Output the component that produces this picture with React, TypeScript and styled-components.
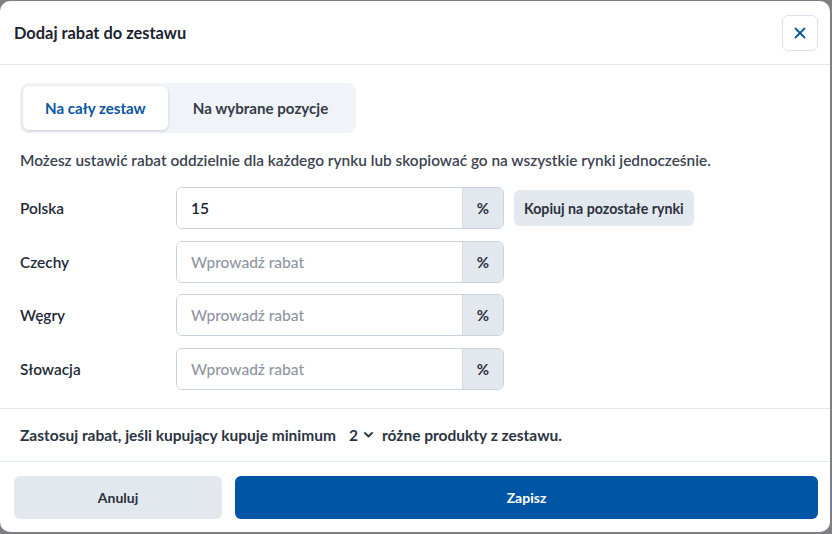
import styled, { createGlobalStyle } from "styled-components";

const GlobalStyle = createGlobalStyle`
    html, body {
        margin: 0;
        padding: 0;
        background: #7d7f82;
        font-family: Lato, "Noto Sans", sans-serif;
    }
`

const Page = styled.div`
    width: 832px;
    height: 534px;
    padding-top: 1px;
    box-sizing: border-box;
`

const Modal = styled.div`
    width: 830px;
    height: 531px;
    background: #ffffff;
    border-radius: 10px;
    display: flex;
    flex-direction: column;
    overflow: hidden;
`

const Header = styled.div`
    height: 63px;
    border-bottom: 1px solid #e2e7ee;
    display: flex;
    align-items: center;
    justify-content: space-between;
    padding: 0 12px 0 14px;
`

const Title = styled.h2`
    margin: 0;
    font-size: 16.4px;
    font-weight: 700;
    color: #1c2330;
`

const CloseButton = styled.button`
    width: 36px;
    height: 36px;
    border: 1px solid #dbe3ed;
    border-radius: 6px;
    background: #ffffff;
    display: flex;
    align-items: center;
    justify-content: center;
    padding: 0;
`

const Body = styled.div`
    padding: 18px 20px 18px 20px;
    border-bottom: 1px solid #e2e7ee;
    display: flex;
    flex-direction: column;
`

const Tabs = styled.div`
    align-self: flex-start;
    display: flex;
    padding: 3px;
    background: #f0f3f7;
    border-radius: 8px;
`

const Tab = styled.div<{ active?: boolean }>`
    height: 44px;
    padding: 0 ${props => (props.active ? "22px" : "25px")};
    display: flex;
    align-items: center;
    border-radius: 6px;
    font-size: 15.1px;
    font-weight: 700;
    color: ${props => (props.active ? "#0b55a3" : "#353c49")};
    background: ${props => (props.active ? "#ffffff" : "transparent")};
    box-shadow: ${props => (props.active ? "0 1px 3px rgba(20, 35, 60, 0.18)" : "none")};
`

const Description = styled.p`
    margin: 17px 0 17px 0;
    font-size: 15.4px;
    line-height: 20px;
    font-weight: 600;
    color: #3b4350;
`

const Rows = styled.div`
    display: flex;
    flex-direction: column;
    gap: 11.7px;
`

const Row = styled.div`
    display: flex;
    align-items: center;
`

const Label = styled.div`
    width: 156px;
    font-size: 15.4px;
    font-weight: 600;
    color: #222a36;
`

const InputGroup = styled.div`
    width: 328px;
    height: 42px;
    box-sizing: border-box;
    border: 1px solid #c9d3df;
    border-radius: 6px;
    display: flex;
    overflow: hidden;
`

const Input = styled.input`
    flex: 1;
    min-width: 0;
    border: none;
    outline: none;
    padding: 0 14px;
    font-family: Lato, "Noto Sans", sans-serif;
    font-size: 15.5px;
    font-weight: 600;
    color: #1c2330;
    background: #ffffff;

    &::placeholder {
        color: #8f96a1;
        font-weight: 500;
    }
`

const Suffix = styled.div`
    width: 40px;
    background: #e3e8ef;
    border-left: 1px solid #d5dce6;
    display: flex;
    align-items: center;
    justify-content: center;
    font-size: 15px;
    font-weight: 700;
    color: #2a313d;
`

const CopyButton = styled.button`
    margin-left: 10px;
    height: 36px;
    padding: 0 10px;
    border: none;
    border-radius: 6px;
    background: #e3e8ef;
    font-family: Lato, "Noto Sans", sans-serif;
    font-size: 14.2px;
    font-weight: 700;
    color: #2a313d;
`

const MinimumBar = styled.div`
    height: 52px;
    border-bottom: 1px solid #e2e7ee;
    padding: 0 20px;
    display: flex;
    align-items: center;
    font-size: 15.5px;
    font-weight: 700;
    color: #2b3443;
`

const CountSelect = styled.span`
    display: inline-flex;
    align-items: center;
    gap: 6px;
    margin: 0 9px 0 13px;
`

const Footer = styled.div`
    flex: 1;
    display: flex;
    align-items: center;
    gap: 13px;
    padding: 0 12px 0 14px;
`

const FooterButton = styled.button<{ primary?: boolean }>`
    height: 43px;
    border: none;
    border-radius: 6px;
    font-family: Lato, "Noto Sans", sans-serif;
    font-size: 14px;
    font-weight: 700;
    flex: ${props => (props.primary ? "1" : "0 0 208px")};
    background: ${props => (props.primary ? "#0055a4" : "#e3e8ef")};
    color: ${props => (props.primary ? "#ffffff" : "#2a313d")};
`

const markets = [
    { name: "Polska", value: "15" },
    { name: "Czechy", value: "" },
    { name: "Węgry", value: "" },
    { name: "Słowacja", value: "" },
]

export default function App() {
    return (
        <Page>
            <GlobalStyle />
            <Modal>
                <Header>
                    <Title>Dodaj rabat do zestawu</Title>
                    <CloseButton>
                        <svg width="12" height="12" viewBox="0 0 12 12">
                            <path d="M1.5 1.5 L10.5 10.5 M10.5 1.5 L1.5 10.5" stroke="#0b55a3" strokeWidth="1.8" strokeLinecap="round" />
                        </svg>
                    </CloseButton>
                </Header>
                <Body>
                    <Tabs>
                        <Tab active>Na cały zestaw</Tab>
                        <Tab>Na wybrane pozycje</Tab>
                    </Tabs>
                    <Description>
                        Możesz ustawić rabat oddzielnie dla każdego rynku lub skopiować go na wszystkie rynki jednocześnie.
                    </Description>
                    <Rows>
                        {markets.map((m, i) => (
                            <Row key={m.name}>
                                <Label>{m.name}</Label>
                                <InputGroup>
                                    <Input defaultValue={m.value} placeholder="Wprowadź rabat" />
                                    <Suffix>%</Suffix>
                                </InputGroup>
                                {i === 0 && <CopyButton>Kopiuj na pozostałe rynki</CopyButton>}
                            </Row>
                        ))}
                    </Rows>
                </Body>
                <MinimumBar>
                    Zastosuj rabat, jeśli kupujący kupuje minimum
                    <CountSelect>
                        2
                        <svg width="9" height="6" viewBox="0 0 9 6">
                            <path d="M1 1 L4.5 4.5 L8 1" stroke="#2b3443" strokeWidth="1.8" fill="none" strokeLinecap="round" strokeLinejoin="round" />
                        </svg>
                    </CountSelect>
                    różne produkty z zestawu.
                </MinimumBar>
                <Footer>
                    <FooterButton>Anuluj</FooterButton>
                    <FooterButton primary>Zapisz</FooterButton>
                </Footer>
            </Modal>
        </Page>
    )
}
